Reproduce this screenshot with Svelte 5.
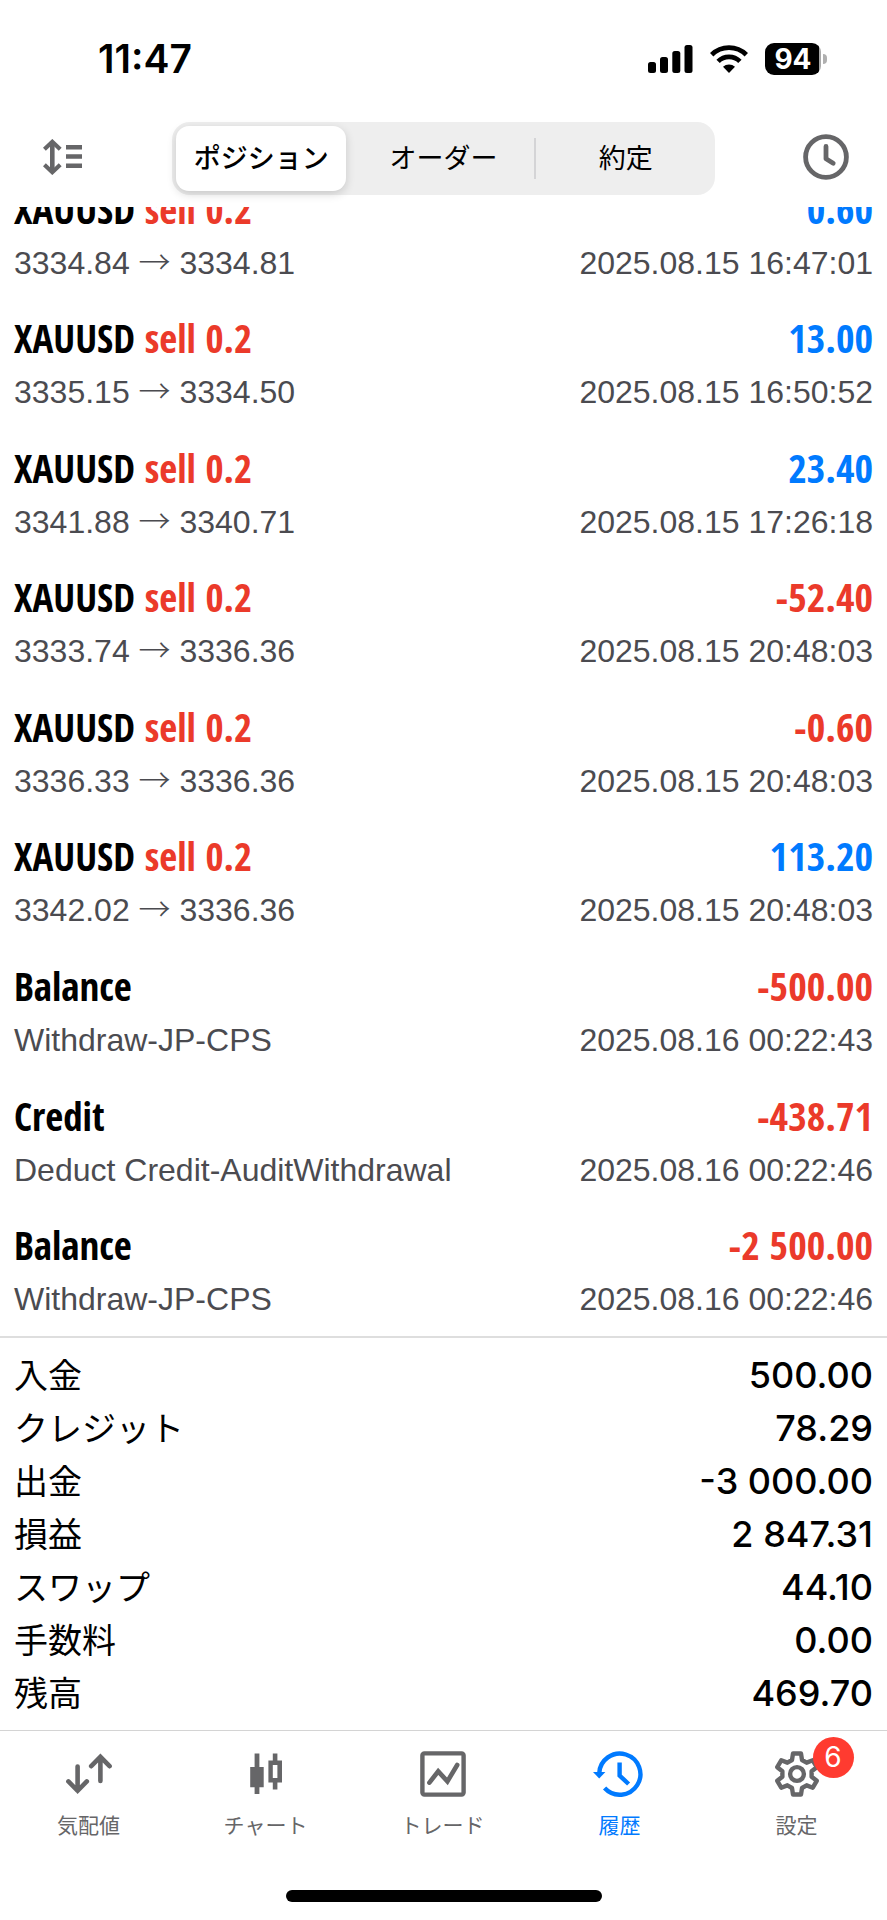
<script lang="ts">
  type Tone = 'up' | 'down';

  interface Entry {
    title: string;
    side?: string;
    detail: string;
    target?: string;
    amount: string;
    tone: Tone;
    time: string;
  }

  const segments = ['ポジション', 'オーダー', '約定'];
  let activeSegment = $state(0);

  const entries: Entry[] = [
    { title: 'XAUUSD', side: 'sell 0.2', detail: '3334.84', target: '3334.81', amount: '0.60', tone: 'up', time: '2025.08.15 16:47:01' },
    { title: 'XAUUSD', side: 'sell 0.2', detail: '3335.15', target: '3334.50', amount: '13.00', tone: 'up', time: '2025.08.15 16:50:52' },
    { title: 'XAUUSD', side: 'sell 0.2', detail: '3341.88', target: '3340.71', amount: '23.40', tone: 'up', time: '2025.08.15 17:26:18' },
    { title: 'XAUUSD', side: 'sell 0.2', detail: '3333.74', target: '3336.36', amount: '-52.40', tone: 'down', time: '2025.08.15 20:48:03' },
    { title: 'XAUUSD', side: 'sell 0.2', detail: '3336.33', target: '3336.36', amount: '-0.60', tone: 'down', time: '2025.08.15 20:48:03' },
    { title: 'XAUUSD', side: 'sell 0.2', detail: '3342.02', target: '3336.36', amount: '113.20', tone: 'up', time: '2025.08.15 20:48:03' },
    { title: 'Balance', detail: 'Withdraw-JP-CPS', amount: '-500.00', tone: 'down', time: '2025.08.16 00:22:43' },
    { title: 'Credit', detail: 'Deduct Credit-AuditWithdrawal', amount: '-438.71', tone: 'down', time: '2025.08.16 00:22:46' },
    { title: 'Balance', detail: 'Withdraw-JP-CPS', amount: '-2 500.00', tone: 'down', time: '2025.08.16 00:22:46' },
  ];

  const summary = [
    { label: '入金', value: '500.00' },
    { label: 'クレジット', value: '78.29' },
    { label: '出金', value: '-3 000.00' },
    { label: '損益', value: '2 847.31' },
    { label: 'スワップ', value: '44.10' },
    { label: '手数料', value: '0.00' },
    { label: '残高', value: '469.70' },
  ];

  const tabs = [
    { id: 'quotes', label: '気配値' },
    { id: 'chart', label: 'チャート' },
    { id: 'trade', label: 'トレード' },
    { id: 'history', label: '履歴' },
    { id: 'settings', label: '設定', badge: 6 },
  ];
  let activeTab = $state('history');

  // Outline of a six-toothed gear around the centre of a 46x46 box
  const tooth = [[-5, -14], [-4, -20.5], [4, -20.5], [5, -14]];
  const gear = [0, 1, 2, 3, 4, 5]
    .flatMap((k) => {
      const a = (k * Math.PI) / 3;
      return tooth.map(([x, y]) => {
        const px = 23 + x * Math.cos(a) - y * Math.sin(a);
        const py = 23 + x * Math.sin(a) + y * Math.cos(a);
        return `${px.toFixed(2)},${py.toFixed(2)}`;
      });
    })
    .join(' ');
</script>

<div class="app">
  <div class="status">
    <time class="clock">11:47</time>
    <div class="indicators">
      <svg width="45" height="28" viewBox="0 0 45 28" aria-hidden="true">
        <rect x="0" y="17" width="8" height="11" rx="2.5" />
        <rect x="12" y="12" width="8" height="16" rx="2.5" />
        <rect x="24.3" y="6" width="8" height="22" rx="2.5" />
        <rect x="36.5" y="0" width="8" height="28" rx="2.5" />
      </svg>
      <svg width="38" height="28" viewBox="0 0 38 28" aria-hidden="true">
        <g fill="none" stroke="#000" stroke-width="4.8">
          <path d="M1.7 9.7a24.6 24.6 0 0 1 34.6 0" />
          <path d="M8.1 16.4a15.6 15.6 0 0 1 21.8 0" />
        </g>
        <path d="M19 28l-6-6.2a8.8 8.8 0 0 1 12 0z" />
      </svg>
      <div class="battery">
        <span class="charge">94</span>
        <span class="nub"></span>
      </div>
    </div>
  </div>

  <header>
    <button class="tool" aria-label="並べ替え">
      <svg width="39" height="36" viewBox="0 0 39 36" aria-hidden="true">
        <g fill="none" stroke="currentColor">
          <path d="M9.3 4v28" stroke-width="4.6" />
          <path d="M1.4 10.2L9.3 2.8l7.9 7.4M1.4 25.8l7.9 7.4 7.9-7.4" stroke-width="4.2" />
          <path d="M23 8.2h16M23 17.5h16M23 26.7h16" stroke-width="4.6" />
        </g>
      </svg>
    </button>
    <div class="segments" role="tablist">
      {#each segments as segment, i}
        <button
          class="segment"
          class:selected={i === activeSegment}
          role="tab"
          aria-selected={i === activeSegment}
          onclick={() => (activeSegment = i)}
        >
          {segment}
        </button>
      {/each}
    </div>
    <button class="tool end" aria-label="期間">
      <svg width="46" height="46" viewBox="0 0 46 46" aria-hidden="true">
        <g fill="none" stroke="currentColor" stroke-width="4.8">
          <circle cx="23" cy="23" r="20.4" />
          <path d="M23 12.4v12.4l7.2 4.4" stroke-linecap="round" stroke-linejoin="round" />
        </g>
      </svg>
    </button>
  </header>

  <section class="history">
    <ul>
      {#each entries as entry}
        <li>
          <div class="line main">
            <span>{entry.title}{#if entry.side}{' '}<span class="down">{entry.side}</span>{/if}</span>
            <span class="amount {entry.tone}">{entry.amount}</span>
          </div>
          <div class="line sub">
            <span>{entry.detail}{#if entry.target}{' '}<span class="arrow">→</span>{' '}{entry.target}{/if}</span>
            <time>{entry.time}</time>
          </div>
        </li>
      {/each}
    </ul>
  </section>

  <dl class="summary">
    {#each summary as row}
      <div>
        <dt>{row.label}</dt>
        <dd>{row.value}</dd>
      </div>
    {/each}
  </dl>

  <nav>
    {#each tabs as tab}
      <a
        href="#{tab.id}"
        class:active={tab.id === activeTab}
        onclick={() => (activeTab = tab.id)}
      >
        <span class="icon">
          {#if tab.id === 'quotes'}
            <svg width="46" height="42" viewBox="0 0 46 42" aria-hidden="true">
              <g fill="none" stroke="currentColor" stroke-width="4.6" stroke-linecap="round">
                <path d="M11.6 13.5v24M2.4 28.4l9.2 9.4 9.2-9.4" />
                <path d="M34.4 28V4M25.2 13.2l9.2-9.4 9.2 9.4" />
              </g>
            </svg>
          {:else if tab.id === 'chart'}
            <svg width="32" height="42" viewBox="0 0 32 42" aria-hidden="true">
              <g fill="currentColor">
                <path d="M4.6.5h4.8V14h4.3v20.3H9.4V41H4.6v-6.7H.2V14h4.4z" />
                <path fill-rule="evenodd" d="M22.8.5h4.6v7H32v22h-4.6v7h-4.6v-7h-4.4v-22h4.4zM22.8 12v13h4.6V12z" />
              </g>
            </svg>
          {:else if tab.id === 'trade'}
            <svg width="46" height="46" viewBox="0 0 46 46" aria-hidden="true">
              <g fill="none" stroke="currentColor">
                <rect x="2.4" y="2.4" width="41.2" height="41.2" rx="2" stroke-width="4.4" />
                <path d="M9.4 31.6l8.8-11.2 9.2 10 9.8-16.4" stroke-width="4.6" stroke-linecap="round" />
              </g>
            </svg>
          {:else if tab.id === 'history'}
            <svg width="54" height="46" viewBox="0 0 54 46" aria-hidden="true">
              <g fill="none" stroke="currentColor" stroke-width="4.4">
                <path d="M6.2 22.5a20.6 20.6 0 1 1 5.4 14.6" />
                <path d="M26.6 11.4v13.2l9 8.4" />
              </g>
              <path d="M0 21h12.4L6.2 27.4z" fill="currentColor" />
            </svg>
          {:else}
            <svg width="46" height="46" viewBox="0 0 46 46" aria-hidden="true">
              <g fill="none" stroke="currentColor" stroke-width="4.4">
                <polygon points={gear} stroke-linejoin="round" />
                <circle cx="23" cy="23" r="6.9" />
              </g>
            </svg>
          {/if}
          {#if tab.badge}
            <span class="badge">{tab.badge}</span>
          {/if}
        </span>
        <span class="label">{tab.label}</span>
      </a>
    {/each}
  </nav>

  <div class="home"></div>
</div>

<style>
  :global(body) {
    background: #fff;
  }

  .app {
    display: flex;
    flex-direction: column;
    min-height: 100vh;
    color: #000;
    font-family: Inter, 'Noto Sans CJK JP', sans-serif;
  }

  button {
    padding: 0;
    border: none;
    background: none;
    color: inherit;
    font: inherit;
    cursor: pointer;
  }

  svg {
    display: block;
  }

  .status {
    display: flex;
    align-items: center;
    justify-content: space-between;
    padding: 34px 60px 38px 98px;
  }

  .clock {
    font-size: 39px;
    font-weight: 600;
    line-height: 50px;
  }

  .indicators {
    display: flex;
    align-items: center;
    gap: 17px;
  }

  .battery {
    display: flex;
    align-items: center;
    gap: 2px;
  }

  .charge {
    width: 56px;
    border-radius: 9px;
    background: linear-gradient(to right, #000 54px, #a8a8a8 54px);
    color: #fff;
    font-size: 28px;
    font-weight: 700;
    line-height: 32px;
    text-align: center;
  }

  .nub {
    width: 4px;
    height: 10px;
    border-radius: 0 5px 5px 0;
    background: #b0b0b0;
  }

  header {
    display: grid;
    grid-template-columns: 172px 1fr 172px;
    align-items: center;
    padding-bottom: 12px;
  }

  .tool {
    display: flex;
    padding: 0 38px 4px 43px;
    color: #666668;
  }

  .end {
    justify-content: flex-end;
  }

  .segments {
    display: grid;
    grid-template-columns: repeat(3, 1fr);
    gap: 12px;
    padding: 4px;
    border-radius: 18px;
    background: #eee;
  }

  .segment {
    position: relative;
    border-radius: 13px;
    font-size: 27px;
    line-height: 65px;
  }

  .selected {
    background: #fff;
    box-shadow: 0 3px 10px rgba(0, 0, 0, 0.16);
    font-weight: 500;
  }

  /* Divider between two segments that are not selected */
  .segment:not(.selected) + .segment:not(.selected)::before {
    content: '';
    position: absolute;
    top: 12px;
    bottom: 12px;
    left: -7px;
    width: 2px;
    background: #d4d4d6;
  }

  .history {
    display: flex;
    flex: 1;
    flex-direction: column;
    overflow: hidden;
    border-bottom: 2px solid #dedede;
  }

  /* The list is scrolled a little way under the header */
  .history ul {
    display: flex;
    flex: 1;
    flex-direction: column;
    margin: -37px 0 0;
    padding: 0;
    list-style: none;
  }

  li {
    display: flex;
    flex: 1;
    flex-direction: column;
    justify-content: flex-end;
    padding: 0 14px 11px;
  }

  .line {
    display: flex;
    justify-content: space-between;
    white-space: nowrap;
  }

  .main {
    font-family: 'Open Sans Condensed', 'Liberation Sans Narrow', 'Roboto Condensed', sans-serif;
    font-size: 39px;
    font-weight: 700;
    line-height: 56px;
  }

  .amount {
    font-size: 40px;
  }

  .sub {
    color: #4b4b50;
    font-family: 'Liberation Sans', Arial, sans-serif;
    font-size: 32px;
    line-height: 52px;
  }

  .arrow {
    font-family: 'Noto Sans CJK JP', sans-serif;
    font-weight: 300;
    line-height: 1;
  }

  .up {
    color: #007aff;
  }

  .down {
    color: #eb3a2a;
  }

  .summary {
    margin: 0;
    padding: 11px 14px 10px;
  }

  .summary div {
    display: flex;
    justify-content: space-between;
    line-height: 53px;
  }

  dt {
    font-size: 34px;
  }

  dd {
    margin: 0;
    font-size: 36px;
    font-weight: 500;
  }

  nav {
    display: grid;
    grid-template-columns: repeat(5, 1fr);
    padding: 20px 2px 49px 0;
    border-top: 1px solid #d4d4d4;
  }

  nav a {
    display: flex;
    flex-direction: column;
    align-items: center;
    gap: 14px;
    color: #666668;
    text-decoration: none;
  }

  nav a.active {
    color: #007aff;
  }

  .icon {
    position: relative;
    display: flex;
    align-items: center;
    height: 46px;
  }

  .label {
    font-size: 21px;
    line-height: 30px;
  }

  .badge {
    position: absolute;
    top: -14px;
    left: 39px;
    width: 41px;
    border-radius: 50%;
    background: #ff3b30;
    color: #fff;
    font-size: 28px;
    line-height: 41px;
    text-align: center;
  }

  .home {
    align-self: center;
    width: 316px;
    height: 12px;
    margin-bottom: 18px;
    border-radius: 6px;
    background: #000;
  }
</style>
